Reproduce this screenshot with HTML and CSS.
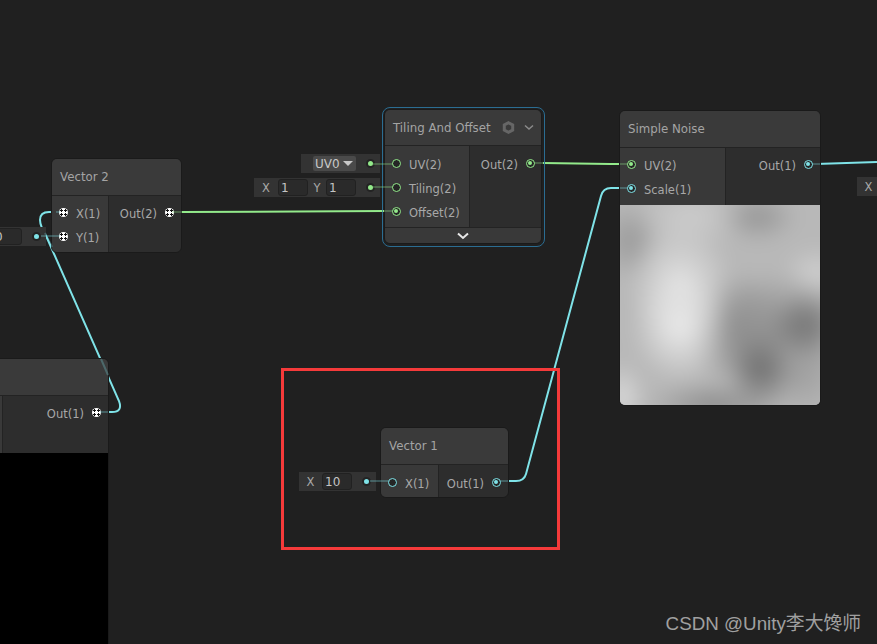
FILE: index.html
```html
<!DOCTYPE html>
<html>
	<head>
		<meta charset="UTF-8">
		<title>Shader Graph</title>
		<link rel="stylesheet" href="styles.css">
	</head>
	<body>
		<div id="canvas">
			<!-- wires that run behind the nodes -->
			<svg class="wires" width="877" height="644" viewBox="0 0 877 644" fill="none">
				<path class="wire green" d="M181 212 L385 211"/>
				<path class="wire green" d="M543 163 L610 164 L620 164"/>
				<path class="wire cyan" d="M816 164 L877 162"/>
				<path class="wire cyan" d="M508 481 L516 481 Q524 481 526 474 L601 196 Q603 188 611 188 L620 188"/>
				<path class="wire cyan" d="M108 412 L112 412 Q123 412 119 401 L47 238 Q40 226 40 220 Q40 212 49 212 L56 212"/>
			</svg>

			<div class="slot slot-uv">
				<span class="drop">UV0<i class="caret"></i></span>
				<i class="dot green"></i>
			</div>
			<div class="slot slot-tiling">
				<span class="lab lab-x">X</span><span class="field">1</span>
				<span class="lab lab-y">Y</span><span class="field">1</span>
				<i class="dot green"></i>
			</div>
			<div class="slot slot-one slot-v2"><span class="lab">X</span><span class="field">0</span><i class="dot cyan"></i></div>
			<div class="slot slot-one slot-v1"><span class="lab">X</span><span class="field">10</span><i class="dot cyan"></i></div>
			<div class="slot slot-one slot-right"><span class="lab">X</span></div>

			<!-- Vector 2 -->
			<div class="node node-v2">
				<div class="title">Vector 2</div>
				<div class="body">
					<div class="col-in col-v2">
						<div class="row"><i class="port mixed"></i>X(1)</div>
						<div class="row"><i class="port mixed"></i>Y(1)</div>
					</div>
					<div class="col-out">
						<div class="row">Out(2)<i class="port mixed"></i></div>
					</div>
				</div>
			</div>

			<!-- node cut off by the left edge -->
			<div class="node node-cut">
				<div class="title"></div>
				<div class="body">
					<div class="col-in col-cut"></div>
					<div class="col-out">
						<div class="row">Out(1)<i class="port mixed"></i></div>
					</div>
				</div>
				<div class="preview-black"></div>
			</div>

			<!-- Tiling And Offset -->
			<div class="selected">
				<div class="node node-tiling">
					<div class="title">
						<span class="grow">Tiling And Offset</span>
						<svg class="gear" width="13" height="13" viewBox="0 0 13 13" fill="none">
							<path d="M6.5 1.7 L10.7 4 L10.7 9 L6.5 11.3 L2.3 9 L2.3 4 Z" stroke="#666" stroke-width="3"/>
						</svg>
						<svg class="chev" width="10" height="7" viewBox="0 0 10 7" fill="none">
							<path d="M1 1.5 L5 5 L9 1.5" stroke="#8a8a8a" stroke-width="1.5"/>
						</svg>
					</div>
					<div class="body">
						<div class="col-in col-tiling">
							<div class="row"><i class="port green"></i>UV(2)</div>
							<div class="row"><i class="port green"></i>Tiling(2)</div>
							<div class="row"><i class="port green on"></i>Offset(2)</div>
						</div>
						<div class="col-out">
							<div class="row">Out(2)<i class="port green on"></i></div>
						</div>
					</div>
					<div class="foot">
						<svg width="12" height="8" viewBox="0 0 12 8" fill="none">
							<path d="M1 1.5 L6 6 L11 1.5" stroke="#e8e8e8" stroke-width="2"/>
						</svg>
					</div>
				</div>
			</div>

			<!-- Simple Noise -->
			<div class="node node-noise">
				<div class="title">Simple Noise</div>
				<div class="body">
					<div class="col-in col-noise">
						<div class="row"><i class="port green on"></i>UV(2)</div>
						<div class="row"><i class="port cyan on"></i>Scale(1)</div>
					</div>
					<div class="col-out">
						<div class="row">Out(1)<i class="port cyan on"></i></div>
					</div>
				</div>
				<div class="noise"></div>
			</div>

			<!-- Vector 1 -->
			<div class="node node-v1">
				<div class="title">Vector 1</div>
				<div class="body">
					<div class="col-in col-v1">
						<div class="row"><i class="port cyan"></i>X(1)</div>
					</div>
					<div class="col-out">
						<div class="row">Out(1)<i class="port cyan on"></i></div>
					</div>
				</div>
			</div>

			<!-- short dim ends of the wires, over the nodes -->
			<svg class="wires stubs" width="877" height="644" viewBox="0 0 877 644" fill="none">
				<path class="stub green" d="M373 164 L393 164"/>
				<path class="stub green" d="M373 187 L393 187"/>
				<path class="stub green" d="M381 211 L393 211"/>
				<path class="stub green" d="M534 163 L543 163"/>
				<path class="stub green" d="M620 164 L628 164"/>
				<path class="stub green" d="M172 212 L182 212"/>
				<path class="stub cyan" d="M620 188 L628 188"/>
				<path class="stub cyan" d="M812 164 L820 164"/>
				<path class="stub cyan" d="M370 481 L389 481"/>
				<path class="stub cyan" d="M500 481 L508 481"/>
				<path class="stub cyan" d="M100 412 L108 412"/>
				<path class="stub cyan" d="M41 236 L60 236"/>
				<path class="stub cyan" d="M56 212 L60 212"/>
				<path class="stub cyan" d="M101 359 L108 375"/>
				<path class="stub cyan" d="M45 233 L52 247"/>
			</svg>

			<div class="mark"></div>
			<div class="watermark">CSDN @Unity李大馋师</div>
		</div>
	</body>
</html>
```

FILE: styles.css
```css
* {
	margin: 0;
	padding: 0;
	box-sizing: border-box;
}

body {
	background: #202020;
	overflow: hidden;
}

#canvas {
	position: relative;
	width: 877px;
	height: 644px;
	overflow: hidden;
	font: 11.5px "DejaVu Sans", "Noto Sans", sans-serif;
	color: #a8a8a8;
}

.wires {
	position: absolute;
	left: 0;
	top: 0;
}

.wire {
	stroke-width: 2;
}
.wire.green { stroke: #93ea8b; }
.wire.cyan { stroke: #7fe3e8; }

.stub {
	stroke-width: 2;
	opacity: 0.28;
}
.stub.green { stroke: #93ea8b; }
.stub.cyan { stroke: #7fe3e8; }

/* nodes */
.node {
	position: absolute;
	display: flex;
	flex-direction: column;
	background: #2d2d2d;
	border: 1px solid #1a1a1a;
	border-radius: 6px;
	overflow: hidden;
}

.title {
	display: flex;
	align-items: center;
	flex: none;
	height: 37px;
	padding: 0 8px;
	background: #3a3a3a;
	border-bottom: 1px solid #232323;
	font-size: 11.8px;
	color: #a4a4a4;
}

.body {
	display: flex;
	flex: none;
}

.col-in {
	flex: none;
	height: 57px;
	padding-top: 6px;
	background: #393939;
	border-right: 1px solid #232323;
}

.col-out {
	flex: 1;
	height: 57px;
	padding-top: 6px;
}

.row {
	display: flex;
	align-items: center;
	height: 24px;
	gap: 8px;
	white-space: nowrap;
}

.col-in .row {
	padding-left: 7px;
}

.col-out .row {
	justify-content: flex-end;
	padding-right: 7px;
}

.port {
	display: block;
	position: relative;
	top: -2px;
	width: 9px;
	height: 9px;
	border-radius: 50%;
	border: 1.5px solid;
	background: #252525;
	flex: none;
}
.port.green { border-color: #93ea8b; }
.port.cyan { border-color: #7fe3e8; }

.port.on::after {
	content: "";
	position: absolute;
	left: 1px;
	top: 1px;
	width: 4px;
	height: 4px;
	border-radius: 50%;
}
.port.green.on::after { background: #93ea8b; }
.port.cyan.on::after { background: #7fe3e8; }

/* the white ports of the dynamic vector type */
.port.mixed {
	border: none;
	background:
		radial-gradient(circle at 2.5px 2.5px, #111 0 1px, transparent 1.4px),
		radial-gradient(circle at 6.5px 2.5px, #111 0 1px, transparent 1.4px),
		radial-gradient(circle at 2.5px 6.5px, #111 0 1px, transparent 1.4px),
		radial-gradient(circle at 6.5px 6.5px, #111 0 1px, transparent 1.4px),
		#fff;
}

.node-v2 {
	left: 51px;
	top: 158px;
	width: 131px;
	height: 95px;
}
.col-v2 { width: 57px; }

.node-cut {
	left: -20px;
	top: 358px;
	width: 129px;
	height: 290px;
	border-radius: 0 6px 0 0;
}
.col-cut { width: 22px; }
.preview-black {
	flex: 1;
	background: #000;
}

.selected {
	position: absolute;
	left: 382px;
	top: 107px;
	width: 163px;
	height: 140px;
	border: 1.5px solid #2b6d92;
	border-radius: 8px;
}

.node-tiling {
	left: 1px;
	top: 1px;
	width: 158px;
	height: 135px;
}
.node-tiling .title { height: 36px; padding-right: 7px; }
.grow { flex: 1; }
.gear { margin-right: 9px; }
.col-tiling { width: 85px; }
.node-tiling .col-in, .node-tiling .col-out { padding-top: 7px; height: 81px; }
.node-tiling .col-out .row { padding-right: 6px; }
.foot {
	display: flex;
	justify-content: center;
	align-items: center;
	flex: 1;
	background: #393939;
	border-top: 1px solid #232323;
}

.node-noise {
	left: 619px;
	top: 110px;
	width: 202px;
	height: 296px;
}
.col-noise { width: 106px; }

.noise {
	flex: 1;
	position: relative;
	overflow: hidden;
	background: #b5b5b5;
}

.noise::before {
	content: "";
	position: absolute;
	left: -30px;
	top: -30px;
	width: 260px;
	height: 260px;
	filter: blur(9px);
	background-color: #b8b8b8;
	background-image:
		radial-gradient(ellipse 50px 56px at 90px 152px, #ebebeb, rgba(235,235,235,0)),
		radial-gradient(ellipse 54px 60px at 90px 108px, #e2e2e2, rgba(226,226,226,0)),
		radial-gradient(ellipse 34px 40px at 170px 195px, #6c6c6c, rgba(108,108,108,0)),
		radial-gradient(ellipse 34px 34px at 216px 150px, #747474, rgba(116,116,116,0)),
		radial-gradient(ellipse 50px 60px at 148px 155px, #8e8e8e, rgba(142,142,142,0)),
		radial-gradient(ellipse 80px 60px at 195px 155px, #8e8e8e, rgba(142,142,142,0)),
		radial-gradient(ellipse 50px 40px at 210px 205px, #a2a2a2, rgba(162,162,162,0)),
		radial-gradient(ellipse 30px 40px at 40px 66px, #989898, rgba(152,152,152,0)),
		radial-gradient(ellipse 40px 26px at 168px 42px, #949494, rgba(148,148,148,0)),
		radial-gradient(ellipse 36px 30px at 226px 100px, #d2d2d2, rgba(210,210,210,0)),
		radial-gradient(ellipse 70px 24px at 125px 230px, #8a8a8a, rgba(138,138,138,0)),
		radial-gradient(ellipse 24px 36px at 32px 222px, #dcdcdc, rgba(220,220,220,0)),
		radial-gradient(ellipse 60px 34px at 100px 42px, #cdcdcd, rgba(205,205,205,0));
}

.node-v1 {
	left: 380px;
	top: 427px;
	width: 129px;
	height: 71px;
}
.col-v1 { width: 58px; }
.node-v1 .col-in, .node-v1 .col-out { padding-top: 7px; height: 33px; }

/* inline value boxes on the left of a port */
.slot {
	position: absolute;
	display: flex;
	align-items: center;
	height: 19px;
	background: #333;
	color: #a8a8a8;
}

.slot-uv { left: 301px; top: 154px; width: 79px; }
.slot-tiling { left: 254px; top: 178px; width: 126px; }
.slot-one { width: 77px; }
.slot-v2 { left: -31px; top: 227px; }
.slot-v1 { left: 299px; top: 472px; }
.slot-right { left: 857px; top: 177px; }

.lab {
	flex: none;
	width: 23px;
	padding-top: 1px;
	text-align: center;
}
.lab-x { width: 24px; }
.lab-y { width: 18px; }

.field {
	flex: none;
	width: 30px;
	height: 17px;
	line-height: 16px;
	padding-left: 2px;
	background: #2a2a2a;
	border: 1px solid #212121;
	border-radius: 3px;
	font-size: 12px;
	color: #c4c4c4;
}

.drop {
	display: flex;
	align-items: center;
	width: 43px;
	height: 15px;
	margin-left: 12px;
	padding-left: 2px;
	gap: 3px;
	background: #4a4a4a;
	border-radius: 2px;
	font-size: 12px;
	color: #c8c8c8;
}

.caret {
	width: 0;
	height: 0;
	border: 5px solid transparent;
	border-top: 5px solid #c8c8c8;
	border-bottom: 0;
}

.dot {
	display: block;
	position: absolute;
	right: 5px;
	top: 5px;
	width: 9px;
	height: 9px;
	border-radius: 50%;
	border: 2.5px solid #232323;
}
.dot.green { background: #93ea8b; }
.dot.cyan { background: #7fe3e8; }

.mark {
	position: absolute;
	left: 281px;
	top: 368px;
	width: 279px;
	height: 182px;
	border: 3px solid #f53a3a;
}

.watermark {
	position: absolute;
	right: 16px;
	top: 608px;
	font: 18.8px "Liberation Sans", "Noto Sans CJK SC", sans-serif;
	color: #a0a0a0;
	white-space: nowrap;
}
```
